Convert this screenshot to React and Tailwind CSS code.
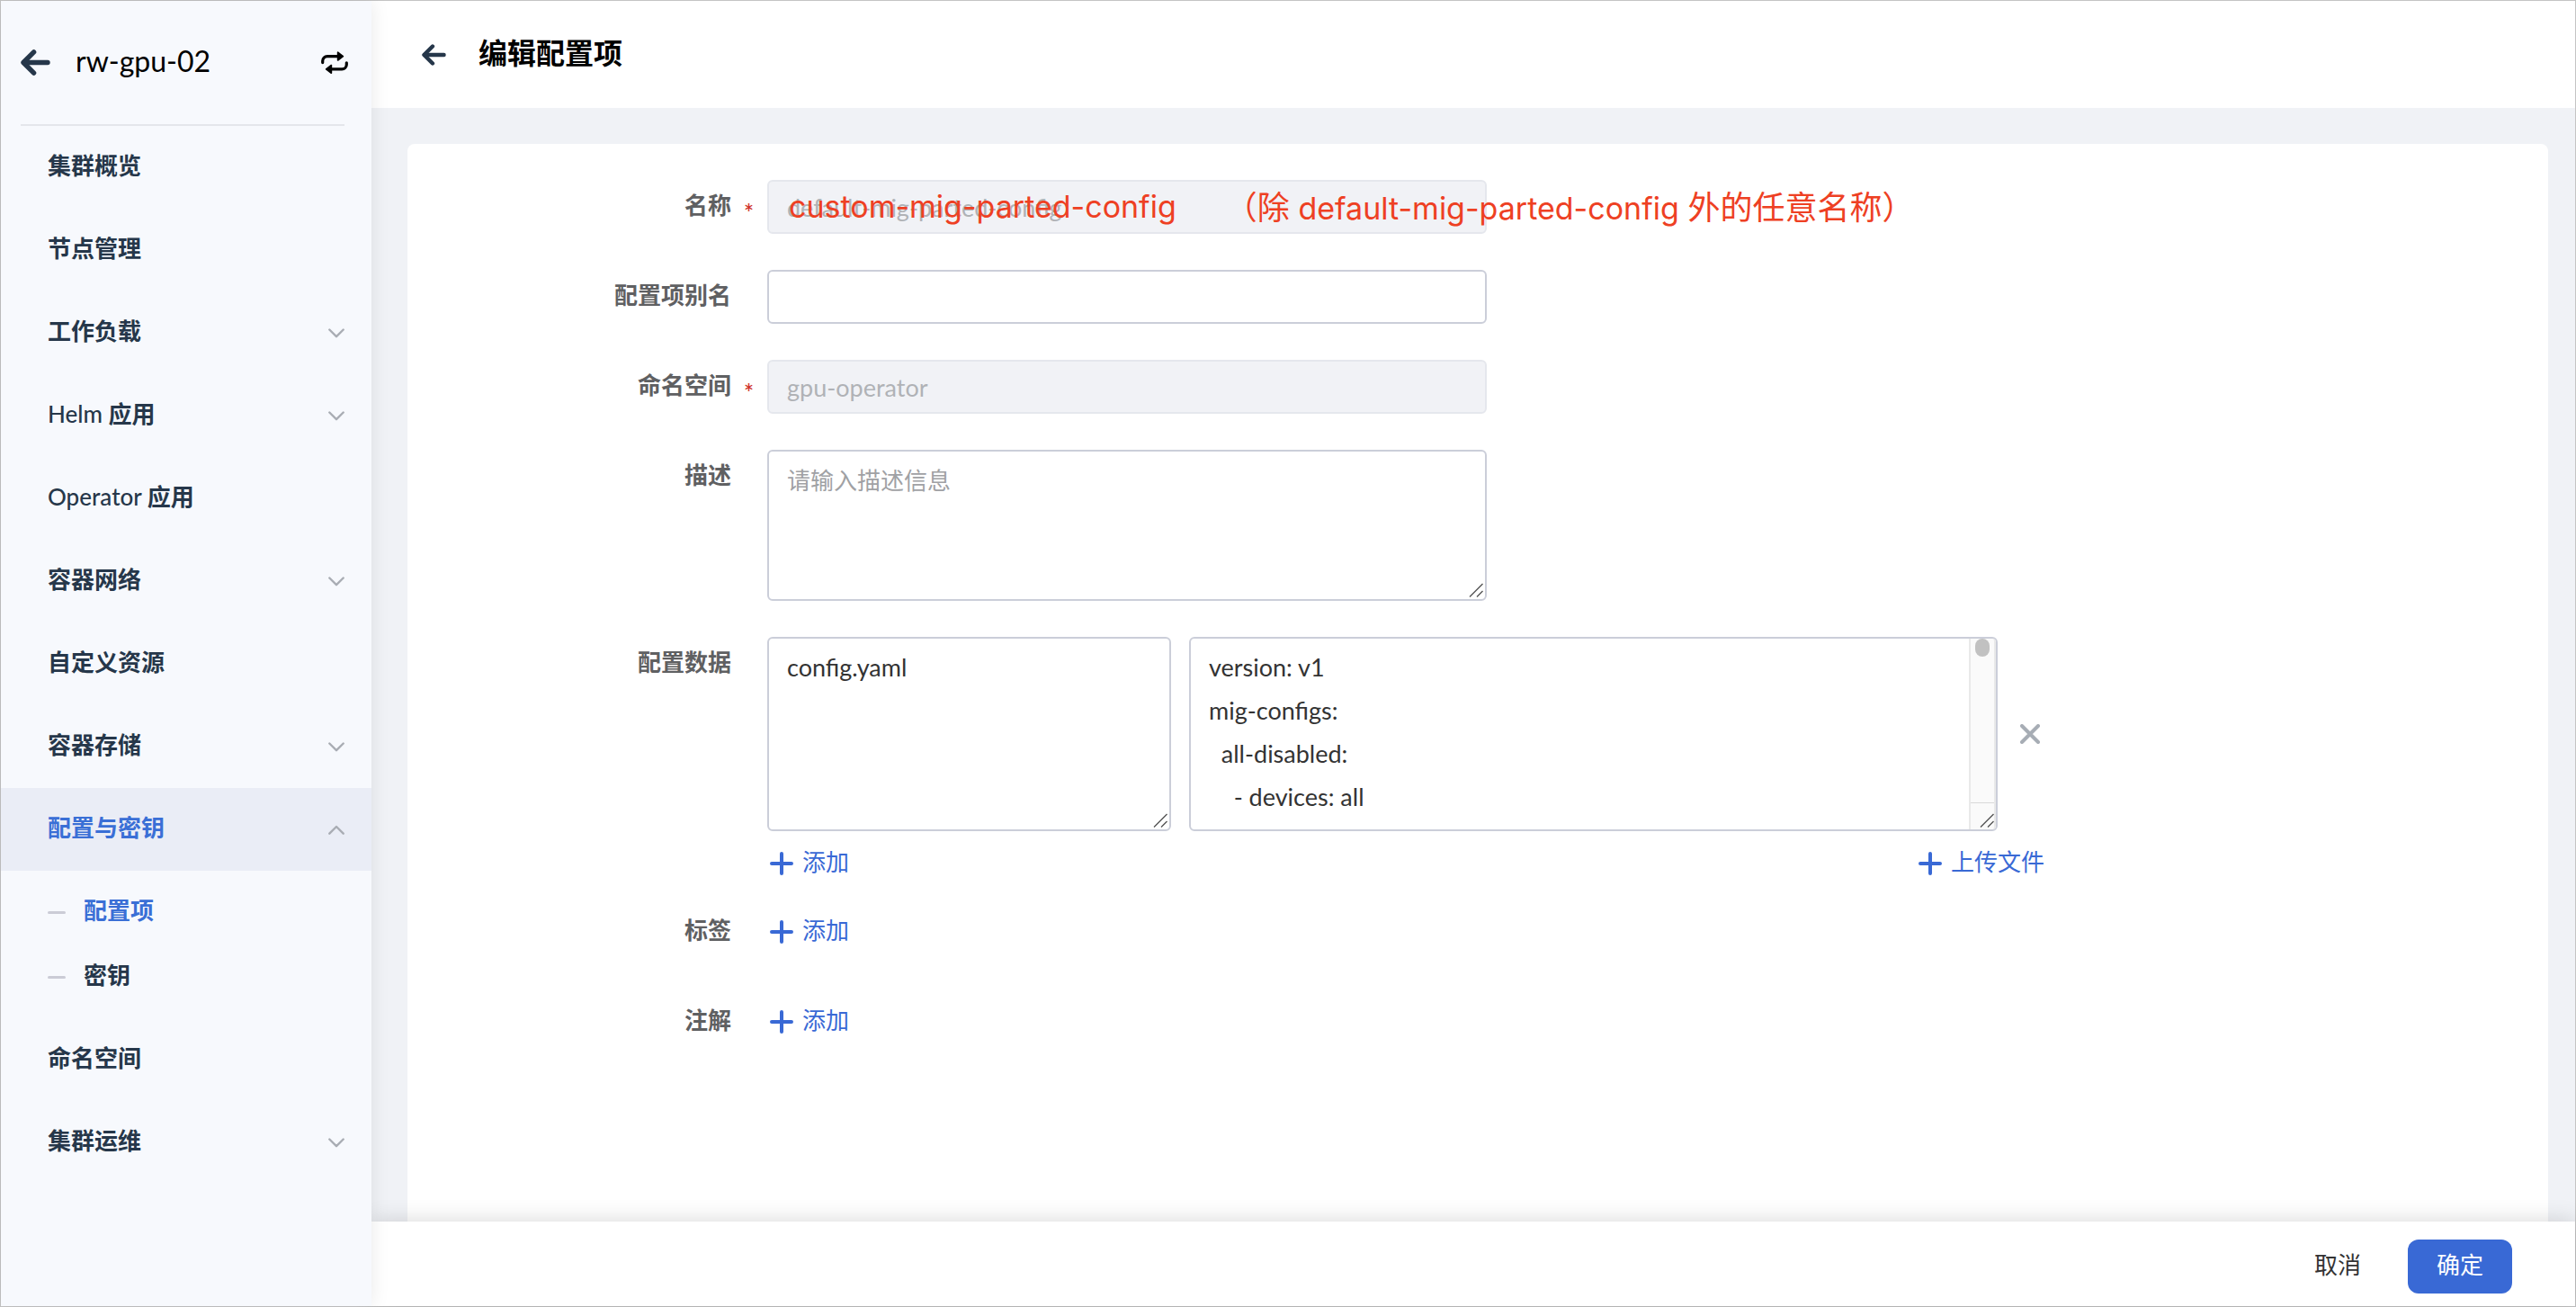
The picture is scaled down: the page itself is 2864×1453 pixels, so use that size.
import { useState } from 'react';

const NAV_TOP = [
  { label: '集群概览' },
  { label: '节点管理' },
  { label: '工作负载', expandable: true },
  { latin: 'Helm', label: '应用', expandable: true },
  { latin: 'Operator', label: '应用' },
  { label: '容器网络', expandable: true },
  { label: '自定义资源' },
  { label: '容器存储', expandable: true },
];

const NAV_CONFIG = [
  { label: '配置项', active: true },
  { label: '密钥' },
];

const NAV_BOTTOM = [
  { label: '命名空间' },
  { label: '集群运维', expandable: true },
];

const CONFIG_TEXT = ['version: v1', 'mig-configs:', '  all-disabled:', '    - devices: all'].join('\n');

function BackArrow({ className }) {
  return (
    <svg viewBox="0 0 33 29" className={className} fill="none" stroke="#26374a" strokeWidth="5.4" strokeLinecap="round" strokeLinejoin="round" aria-hidden="true">
      <path d="M14.6 2.9 3 14.5l11.6 11.6" />
      <path d="M4 14.5h26" />
    </svg>
  );
}

function SwitchIcon() {
  return (
    <svg viewBox="0 0 30 26" className="h-[26px] w-[30px]" aria-hidden="true">
      <path d="M1.7 12.6v-1.8a5.2 5.2 0 0 1 5.2-5.2H19M28.3 12.8v1.9a5.2 5.2 0 0 1-5.2 5.2H11" fill="none" stroke="#000" strokeWidth="3.2" strokeLinecap="round" />
      <path d="M18.6 1.2v8.8l5.8-4.4zM11.4 15.5v8.8l-5.8-4.4z" fill="#000" stroke="#000" strokeWidth="1.6" strokeLinejoin="round" />
    </svg>
  );
}

function Chevron({ up }) {
  return (
    <svg viewBox="0 0 18 11" className="h-[11px] w-[18px]" fill="none" stroke="#a9adb4" strokeWidth="2.4" strokeLinecap="round" strokeLinejoin="round" aria-hidden="true">
      <path d={up ? 'M1.3 9.7 9 2l7.7 7.7' : 'M1.3 1.5 9 9.2l7.7-7.7'} />
    </svg>
  );
}

function PlusIcon() {
  return (
    <svg viewBox="0 0 26 26" className="size-[26px]" fill="none" stroke="currentColor" strokeWidth="4" strokeLinecap="round" aria-hidden="true">
      <path d="M13 2v22M2 13h22" />
    </svg>
  );
}

function ResizeGrip() {
  return (
    <svg viewBox="0 0 16 16" className="pointer-events-none absolute right-1 bottom-1 size-4" fill="none" stroke="#555" strokeWidth="1.4" aria-hidden="true">
      <path d="M1 15.5 15.5 1M9 15.5l6.5-6.5" />
    </svg>
  );
}

function NavItem({ latin, label, expandable, active }) {
  return (
    <a
      href="#"
      aria-current={active ? 'true' : undefined}
      className={
        active
          ? 'flex h-[92px] items-center justify-between bg-[#eaedf6] pr-[30px] pl-[52px] font-semibold text-[#3a6fd6]'
          : 'flex h-[92px] items-center justify-between pr-[30px] pl-[52px] font-semibold text-[#26374a]'
      }
    >
      <span className="pb-1">
        {latin && <span className="font-medium">{latin} </span>}
        {label}
      </span>
      {expandable && <Chevron up={active} />}
    </a>
  );
}

function SubItem({ label, active }) {
  return (
    <a
      href="#"
      className={
        active
          ? 'flex h-[72px] items-center gap-5 pl-[52px] font-semibold text-[#3a6fd6]'
          : 'flex h-[72px] items-center gap-5 pl-[52px] font-semibold text-[#26374a]'
      }
    >
      <span className="h-[3px] w-5 rounded-full bg-[#cbccd6]" />
      <span className="pb-1">{label}</span>
    </a>
  );
}

function Sidebar() {
  return (
    <aside className="relative z-10 w-[412px] shrink-0 bg-[#f7f9fd] shadow-[0_0_20px_rgba(0,0,0,0.09)]">
      <div className="mr-[30px] ml-[22px] flex h-[139px] items-center border-b-2 border-[#e4e6eb]">
        <button type="button" aria-label="返回" className="shrink-0">
          <BackArrow className="h-[29px] w-[33px]" />
        </button>
        <span className="ml-7 pb-1 text-[32px] text-black">rw-gpu-02</span>
        <button type="button" aria-label="切换集群" className="-mr-1 ml-auto">
          <SwitchIcon />
        </button>
      </div>
      <nav>
        {NAV_TOP.map((item) => (
          <NavItem key={item.latin || item.label} {...item} />
        ))}
        <NavItem label="配置与密钥" expandable active />
        <div className="py-2.5">
          {NAV_CONFIG.map((item) => (
            <SubItem key={item.label} {...item} />
          ))}
        </div>
        {NAV_BOTTOM.map((item) => (
          <NavItem key={item.label} {...item} />
        ))}
      </nav>
    </aside>
  );
}

function Field({ label, htmlFor, required, last, children }) {
  return (
    <div className={last ? 'flex' : 'mb-10 flex'}>
      <label htmlFor={htmlFor} className="flex h-[60px] w-[400px] shrink-0 items-center justify-end font-semibold text-[#5f6062]">
        <span className="pb-1">{label}</span>
        <span className="w-10 pt-3 pl-3.5 text-[#d0342c]">{required ? '*' : ''}</span>
      </label>
      <div className="min-w-0 flex-1">{children}</div>
    </div>
  );
}

function AddButton({ children }) {
  return (
    <button type="button" className="flex h-[60px] items-center gap-2.5 pl-[3px] text-[#3969d5]">
      <PlusIcon />
      <span className="pb-1">{children}</span>
    </button>
  );
}

function ConfigForm() {
  const [alias, setAlias] = useState('');
  const [desc, setDesc] = useState('');
  const [dataKey, setDataKey] = useState('config.yaml');
  const [dataValue, setDataValue] = useState(CONFIG_TEXT);

  return (
    <form className="pt-10 pb-10">
      <Field label="名称" htmlFor="name" required>
        <div className="relative max-w-[800px]">
          <input
            id="name"
            disabled
            defaultValue="default-mig-parted-config"
            className="block h-[60px] w-full rounded-md border-2 border-[#e5e7ed] bg-[#f1f2f6] px-5 text-[27px] text-[#b0b2b6]"
          />
          <div className="pointer-events-none absolute inset-y-0 left-6 flex items-center gap-[54px] text-4xl whitespace-pre text-[#ee4023]">
            <span className="font-[Inter] text-[34px]">custom-mig-parted-config</span>
            <span>
              （除<span className="font-[Inter] text-[34px]"> default-mig-parted-config </span>外的任意名称）
            </span>
          </div>
        </div>
      </Field>

      <Field label="配置项别名" htmlFor="alias">
        <input
          id="alias"
          value={alias}
          onChange={(e) => setAlias(e.target.value)}
          className="block h-[60px] w-full max-w-[800px] rounded-md border-2 border-[#cbced9] bg-white px-5 text-[27px] text-[#333]"
        />
      </Field>

      <Field label="命名空间" htmlFor="namespace" required>
        <input
          id="namespace"
          disabled
          defaultValue="gpu-operator"
          className="block h-[60px] w-full max-w-[800px] rounded-md border-2 border-[#e5e7ed] bg-[#f1f2f6] px-5 text-[27px] text-[#b0b2b6]"
        />
      </Field>

      <Field label="描述" htmlFor="desc">
        <div className="relative max-w-[800px]">
          <textarea
            id="desc"
            value={desc}
            onChange={(e) => setDesc(e.target.value)}
            placeholder="请输入描述信息"
            className="block h-[168px] w-full resize-none rounded-md border-2 border-[#cbced9] bg-white px-5 py-2 leading-[48px] text-[#333] placeholder:text-[#a0a1a4]"
          />
          <ResizeGrip />
        </div>
      </Field>

      <div className="mb-4">
        <Field label="配置数据" htmlFor="data-key" last>
          <div className="max-w-[1420px]">
            <div className="flex items-center gap-5">
              <div className="relative w-[449px]">
                <textarea
                  id="data-key"
                  value={dataKey}
                  onChange={(e) => setDataKey(e.target.value)}
                  className="block h-[216px] w-full resize-none rounded-md border-2 border-[#cbced9] bg-white px-5 py-2 text-[27px] leading-[48px] text-[#333]"
                />
                <ResizeGrip />
              </div>
              <div className="relative min-w-0 flex-1">
                <textarea
                  aria-label="配置数据值"
                  value={dataValue}
                  onChange={(e) => setDataValue(e.target.value)}
                  className="block h-[216px] w-full resize-none overflow-hidden rounded-md border-2 border-[#cbced9] bg-white px-5 py-2 text-[27px] leading-[48px] text-[#333]"
                />
                <div className="pointer-events-none absolute inset-y-0.5 right-0.5 flex w-[30px] flex-col rounded-r-sm border-x-2 border-[#e9e9e9] bg-[#fafafa]">
                  <div className="mx-auto h-5 w-4 rounded-full bg-[#c1c1c1]" />
                  <div className="mt-auto h-[30px] border-t border-[#d9d9d9]" />
                </div>
                <ResizeGrip />
              </div>
              <button type="button" aria-label="删除" className="flex size-8 items-center justify-center">
                <svg viewBox="0 0 22 22" className="size-[22px]" fill="none" stroke="#a7adb5" strokeWidth="4" strokeLinecap="round" aria-hidden="true">
                  <path d="m2 2 18 18M20 2 2 20" />
                </svg>
              </button>
            </div>
            <div className="mt-1.5 flex justify-between">
              <AddButton>添加</AddButton>
              <AddButton>上传文件</AddButton>
            </div>
          </div>
        </Field>
      </div>

      <Field label="标签">
        <AddButton>添加</AddButton>
      </Field>
      <Field label="注解" last>
        <AddButton>添加</AddButton>
      </Field>
    </form>
  );
}

export default function App() {
  return (
    <div lang="zh-CN" className="flex min-h-screen border border-[#c4c4c4] bg-[#f0f2f6] font-[Lato,'Noto_Sans_CJK_SC',sans-serif] text-[26px] leading-none">
      <Sidebar />
      <div className="flex min-w-0 flex-1 flex-col">
        <header className="flex h-[119px] items-center bg-white pl-14">
          <button type="button" aria-label="返回上一页">
            <BackArrow className="h-6 w-[27px]" />
          </button>
          <h1 className="ml-9 pb-1 text-[32px] font-semibold text-black">编辑配置项</h1>
        </header>
        <main className="flex flex-1 flex-col pt-10 pr-[30px] pl-10">
          <div className="flex-1 rounded-t-lg bg-white">
            <ConfigForm />
          </div>
        </main>
        <footer className="relative flex h-[94px] items-start justify-end gap-13 bg-white pt-5 pr-[70px] shadow-[0_0_24px_rgba(0,0,0,0.16)]">
          <button type="button" className="h-[60px] pb-1 text-[#333]">取消</button>
          <button type="button" className="h-[60px] w-[116px] rounded-xl bg-[#3969d5] pb-1 text-white">确定</button>
        </footer>
      </div>
    </div>
  );
}
